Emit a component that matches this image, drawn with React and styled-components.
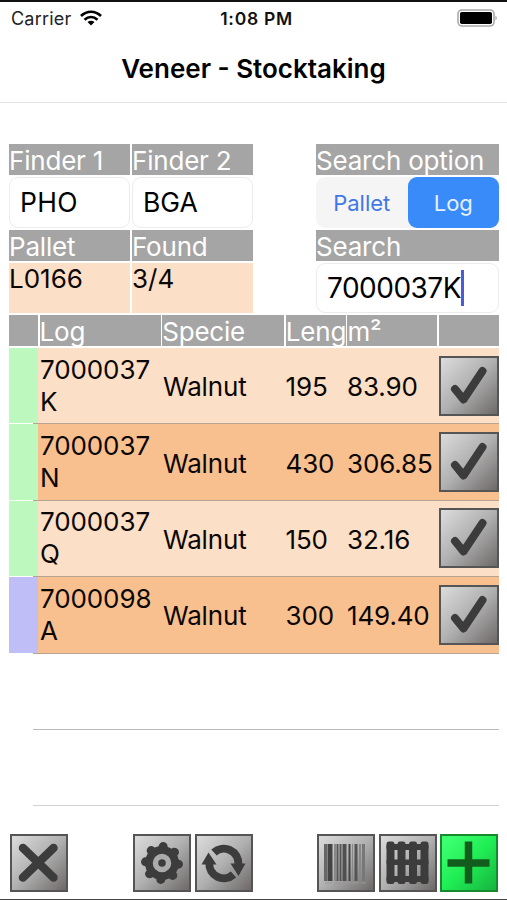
import React from "react";
import styled, { createGlobalStyle } from "styled-components";

const GlobalStyle = createGlobalStyle`
  * {
    box-sizing: border-box;
  }
  body {
    margin: 0;
    background: #fff;
    color: #0b0704;
    font-family: Inter, "Liberation Sans", sans-serif;
  }
`;

const Screen = styled.div`
  width: 507px;
  height: 900px;
  display: flex;
  flex-direction: column;
  overflow: hidden;
  border-top: 2px solid #111;
  border-bottom: 1px solid #444;
`;

const StatusBar = styled.div`
  height: 32px;
  flex: none;
  display: grid;
  grid-template-columns: 1fr auto 1fr;
  align-items: center;
  padding: 0 9px 0 11px;
  font-size: 18px;
  color: #222;
`;

const Carrier = styled.div`
  display: flex;
  align-items: center;
  gap: 9px;
  letter-spacing: 0.2px;
`;

const Clock = styled.div`
  padding-left: 4px;
  font-weight: 600;
  font-size: 17.5px;
  letter-spacing: 0.7px;
  color: #111;
`;

const Battery = styled.svg`
  justify-self: end;
`;

const TitleBar = styled.h1`
  height: 69px;
  flex: none;
  margin: 0;
  display: flex;
  align-items: center;
  justify-content: center;
  border-bottom: 1px solid #e4e4e4;
  font-size: 26px;
  font-weight: 600;
  color: #000;
`;

const Form = styled.div`
  display: flex;
  justify-content: space-between;
  padding: 41px 8px 0 9px;
`;

const FieldGrid = styled.div`
  display: grid;
  grid-template-columns: ${({ $columns }) => $columns};
  grid-template-rows: 31px 51px 31px 50px;
  column-gap: 2px;
  row-gap: 2px;
`;

const Label = styled.div`
  height: 31px;
  background: #a5a5a5;
  color: #fff;
  font-size: 26px;
  line-height: 33px;
  letter-spacing: -0.2px;
  white-space: nowrap;
`;

const Field = styled.div`
  display: flex;
  align-items: center;
  padding: 0 0 1px 10px;
  border: 1px solid #ececec;
  border-radius: 9px;
  color: #000;
  font-size: ${({ $size }) => $size || 26.5}px;
  letter-spacing: ${({ $spacing }) => $spacing || 0}px;
`;

const Caret = styled.span`
  width: 3px;
  height: 36px;
  background: #4a5cd8;
`;

const Value = styled.div`
  background: #fbdfc7;
  font-size: 26px;
  line-height: 31px;
`;

const Segmented = styled.div`
  display: grid;
  grid-template-columns: 1fr 1fr;
  border-radius: 9px;
  background: #f5f5f6;
`;

const Segment = styled.button`
  border: 0;
  border-radius: 9px;
  padding: 0;
  font: 22px Inter, sans-serif;
  background: ${({ $active }) => ($active ? "#3a8bfa" : "transparent")};
  color: ${({ $active }) => ($active ? "#e4f1ff" : "#4078e8")};
`;

const Table = styled.div`
  padding: 2px 8px 0 9px;
`;

const HeadRow = styled.div`
  display: grid;
  grid-template-columns: 29px 121px 122px 60px 90px 60px;
  column-gap: 1.6px;
  padding-bottom: 2px;
`;

const Row = styled.div`
  height: 75.4px;
  display: grid;
  grid-template-columns: 29px 124px 122.5px 61.5px 93px 60px;
  align-items: center;
  background: ${({ $shade }) => $shade};
  font-size: 26px;
`;

// the separator starts a little inside the status column
const Divider = styled.div`
  height: 1px;
  margin-left: 24px;
  background: ${({ $line }) => $line || "#bababa"};
`;

const EmptyRow = styled.div`
  height: 75.3px;
`;

const State = styled.span`
  align-self: stretch;
  background: ${({ $color }) => $color};
`;

const Lines = styled.div`
  width: 122px;
  padding-left: 2px;
  line-height: 32px;
  letter-spacing: -0.1px;
  word-break: break-all;
`;

const Cell = styled.div`
  padding: 2px 0 0 ${({ $inset }) => $inset || 1}px;
  letter-spacing: -0.15px;
  white-space: nowrap;
`;

const IconButton = styled.button`
  width: ${({ $size }) => $size || 58}px;
  height: ${({ $size }) => $size || 58}px;
  flex: none;
  display: block;
  padding: 0;
  border: 2px solid ${({ $green }) => ($green ? "#168a2c" : "#555")};
  background: ${({ $green }) =>
    $green
      ? "linear-gradient(135deg, #3dff70 10%, #20ee55 50%, #17b440)"
      : "linear-gradient(135deg, #dcdcdc, #b0b0b0 50%, #6d6968)"};

  svg {
    display: block;
    width: 100%;
    height: 100%;
  }
`;

const Toolbar = styled.div`
  display: flex;
  margin-top: auto;
  padding: 0 9px 7px 10px;
`;

const Group = styled.div`
  display: flex;
  gap: 3.5px;
  margin-left: ${({ $offset }) => $offset || 0}px;
`;

const CheckIcon = () => (
  <svg viewBox="0 0 56 56" fill="none" stroke="#3c3c3c" strokeWidth="8" strokeLinecap="round" strokeLinejoin="round">
    <path d="M14 31 22.5 41.5 41.5 13" />
  </svg>
);

const CrossIcon = () => (
  <svg viewBox="0 0 54 54" fill="none" stroke="#3c3c3c" strokeWidth="8.5" strokeLinecap="round">
    <path d="M11 12 41.5 41.5M41.5 12 11 41.5" />
  </svg>
);

const GearIcon = () => (
  <svg viewBox="0 0 54 54" fill="#3c3c3c">
    <circle cx="27" cy="27" r="17" />
    <g stroke="#3c3c3c" strokeWidth="9" strokeLinecap="round">
      {[0, 45, 90, 135].map((a) => (
        <path key={a} d="M27 10.5V43.5" transform={`rotate(${a + 4} 27 27)`} />
      ))}
    </g>
    <circle cx="27" cy="27" r="6.5" fill="none" stroke="#ababab" strokeWidth="5.5" />
  </svg>
);

const RefreshIcon = () => (
  <svg viewBox="0 0 54 54">
    <g fill="none" stroke="#3c3c3c" strokeWidth="8">
      <path d="M17 16.5A14.5 14.5 0 0 1 41.3 28" />
      <path d="M12.3 27A14.5 14.5 0 0 0 36.5 38.5" />
    </g>
    <path d="M33.5 27.5H48.5L41.5 40ZM4.5 28.5 11.5 16.5 19.5 28.5Z" fill="#3c3c3c" />
  </svg>
);

const bars = [
  [6, 3, "#666"], [9.5, 5, "#444"], [16, 2, "#888"], [18.5, 2, "#555"], [21.5, 2, "#555"],
  [24.5, 4, "#505050"], [30.5, 2, "#444"], [34, 1, "#888"], [36.5, 3, "#555"], [41, 2, "#888"], [44, 3, "#777"],
];

const BarcodeIcon = () => (
  <svg viewBox="0 0 54 54">
    {bars.map(([x, w, fill]) => (
      <rect key={x} x={x - 1} y="8" width={w} height="37" fill={fill} />
    ))}
    <path d="M6 47H47" stroke="#999" strokeWidth="1" strokeDasharray="7 2" />
  </svg>
);

const PalletIcon = () => (
  <svg viewBox="0 0 54 54" fill="#3c3c3c">
    {[5.5, 16.5, 28, 39.5].map((x) => (
      <rect key={x} x={x} y="5.5" width="8" height="42.5" rx="2.5" />
    ))}
    <rect x="5.5" y="8" width="42" height="6" rx="2" />
    <rect x="5.5" y="23.5" width="42" height="5.5" rx="2" />
    <rect x="5.5" y="40" width="42" height="6" rx="2" />
  </svg>
);

const PlusIcon = () => (
  <svg viewBox="0 0 54 54" fill="none" stroke="#125d1d" strokeWidth="7.5">
    <path d="M26.5 5.5V47.5M5.5 27H47.5" />
  </svg>
);

const logs = [
  { log: "7000037K", specie: "Walnut", length: "195", area: "83.90", state: "#bdf8bf" },
  { log: "7000037N", specie: "Walnut", length: "430", area: "306.85", state: "#bdf8bf" },
  { log: "7000037Q", specie: "Walnut", length: "150", area: "32.16", state: "#bdf8bf" },
  { log: "7000098A", specie: "Walnut", length: "300", area: "149.40", state: "#bfbef7" },
];

const columns = ["", "Log", "Specie", "Leng", "m²", ""];

const App = () => {
  return (
    <>
      <GlobalStyle />
      <Screen>
        <StatusBar>
          <Carrier>
            Carrier
            <svg width="22" height="16" viewBox="0 0 22 16" fill="none" stroke="#000" strokeWidth="2.7">
              <path d="M1 6C7 .3 15 .3 21 6M4.5 9.8C8.5 6.3 13.5 6.3 17.5 9.8" />
              <path d="M11 15.5 7.5 12Q11 9.5 14.5 12Z" fill="#000" stroke="none" />
            </svg>
          </Carrier>
          <Clock>1:08 PM</Clock>
          <Battery width="41" height="18" viewBox="0 0 41 18">
            <rect x="1" y="1" width="36" height="16" rx="4" fill="none" stroke="#aaa" strokeWidth="1.6" />
            <rect x="3" y="3" width="32" height="12" rx="1.8" fill="#000" />
            <path d="M38.5 6.5Q41 9 38.5 11.5Z" fill="#999" />
          </Battery>
        </StatusBar>
        <TitleBar>Veneer - Stocktaking</TitleBar>
        <Form>
          <FieldGrid $columns="121px 121px">
            <Label>Finder 1</Label>
            <Label>Finder 2</Label>
            <Field $spacing={0.3}>PHO</Field>
            <Field>BGA</Field>
            <Label>Pallet</Label>
            <Label>Found</Label>
            <Value>L0166</Value>
            <Value>3/4</Value>
          </FieldGrid>
          <FieldGrid $columns="183px">
            <Label>Search option</Label>
            <Segmented>
              <Segment>Pallet</Segment>
              <Segment $active>Log</Segment>
            </Segmented>
            <Label>Search</Label>
            <Field $size={28} $spacing={-0.5}>
              7000037K
              <Caret />
            </Field>
          </FieldGrid>
        </Form>
        <Table>
          <HeadRow>
            {columns.map((name, i) => (
              <Label key={i}>{name}</Label>
            ))}
          </HeadRow>
          {logs.map((item, i) => (
            <React.Fragment key={item.log}>
              <Row $shade={i % 2 ? "#f9c08f" : "#fbdfc7"}>
                <State $color={item.state} />
                <Lines>{item.log}</Lines>
                <Cell>{item.specie}</Cell>
                <Cell>{item.length}</Cell>
                <Cell>{item.area}</Cell>
                <IconButton $size={60}>
                  <CheckIcon />
                </IconButton>
              </Row>
              <Divider $line="#b9a494" />
            </React.Fragment>
          ))}
          <EmptyRow />
          <Divider />
          <EmptyRow />
          <Divider $line="#d2d2d2" />
        </Table>
        <Toolbar>
          <Group>
            <IconButton><CrossIcon /></IconButton>
          </Group>
          <Group $offset={65}>
            <IconButton><GearIcon /></IconButton>
            <IconButton><RefreshIcon /></IconButton>
          </Group>
          <Group $offset={64.5}>
            <IconButton><BarcodeIcon /></IconButton>
            <IconButton><PalletIcon /></IconButton>
            <IconButton $green><PlusIcon /></IconButton>
          </Group>
        </Toolbar>
      </Screen>
    </>
  );
};

export default App;
